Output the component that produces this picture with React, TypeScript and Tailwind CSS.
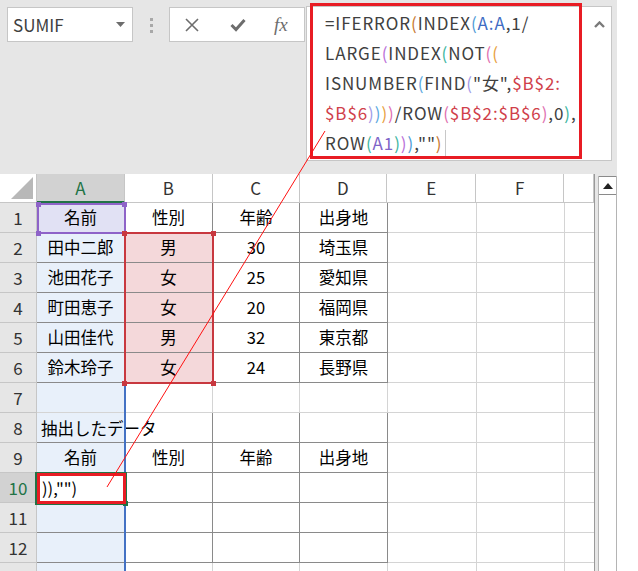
import React from 'react';

const font = { fontFamily: '"Noto Sans CJK JP", "Noto Sans", sans-serif' };

// column widths for A..G (G is cut off by the scrollbar)
const cols = [
  { key: 'A', w: 'w-[88px]' },
  { key: 'B', w: 'w-[88px]' },
  { key: 'C', w: 'w-[87px]' },
  { key: 'D', w: 'w-[88px]' },
  { key: 'E', w: 'w-[89px]' },
  { key: 'F', w: 'w-[88px]' },
  { key: '', w: 'w-[30px]' },
];

const rows: string[][] = [
  ['名前', '性別', '年齢', '出身地'],
  ['田中二郎', '男', '30', '埼玉県'],
  ['池田花子', '女', '25', '愛知県'],
  ['町田恵子', '女', '20', '福岡県'],
  ['山田佳代', '男', '32', '東京都'],
  ['鈴木玲子', '女', '24', '長野県'],
  [],
  [],
  ['名前', '性別', '年齢', '出身地'],
  [],
  [],
  [],
  [],
];

// paren / reference colours in the formula bar
const P1 = 'text-[#c8782f]';
const P2 = 'text-[#4e9ad6]';
const P3 = 'text-[#b970d8]';
const P4 = 'text-[#3bb5a0]';
const P5 = 'text-[#e070b0]';
const P6 = 'text-[#e8a040]';
const P7 = 'text-[#5aa8e0]';
const P8 = 'text-[#9f9be8]';
const REF_A = 'text-[#3f6cc4]';
const REF_B = 'text-[#d0404a]';
const REF_A1 = 'text-[#8064c8]';

function C({ c, children }: { c: string; children: React.ReactNode }) {
  return <span className={c}>{children}</span>;
}

function FormulaText() {
  return (
    <div className="text-[17px] leading-[30px] tracking-[0.9px] text-[#404040]" style={font}>
      <div>
        =IFERROR<C c={P1}>(</C>INDEX<C c={P2}>(</C><C c={REF_A}>A:A</C>,1/
      </div>
      <div>
        LARGE<C c={P3}>(</C>INDEX<C c={P4}>(</C>NOT<C c={P5}>(</C><C c={P6}>(</C>
      </div>
      <div>
        ISNUMBER<C c={P7}>(</C>FIND<C c={P8}>(</C>"女",<C c={REF_B}>$B$2:</C>
      </div>
      <div>
        <C c={REF_B}>$B$6</C><C c={P8}>)</C><C c={P7}>)</C><C c={P6}>)</C><C c={P5}>)</C>/ROW<C c={P5}>(</C>
        <C c={REF_B}>$B$2:$B$6</C><C c={P5}>)</C>,0<C c={P4}>)</C>,
      </div>
      <div className="flex items-center">
        <span>
          ROW<C c={P4}>(</C><C c={REF_A1}>A1</C><C c={P4}>)</C><C c={P3}>)</C><C c={P2}>)</C>,""<C c={P1}>)</C>
        </span>
        <span className="ml-[2px] w-px h-[27px] bg-[#c8c8c8]" />
      </div>
    </div>
  );
}

function Toolbar() {
  return (
    <div className="h-[174px] flex items-start pt-[6px]">
      <div className="mt-px ml-[7px] w-[126px] h-[35px] bg-white border border-[#c6c6c6] flex items-center justify-between pl-[5px] pr-[7px]">
        <span className="text-[17px] text-[#404040]" style={font}>SUMIF</span>
        <svg width="9" height="5" viewBox="0 0 9 5">
          <path d="M0 0 L9 0 L4.5 5 Z" fill="#6d6d6d" />
        </svg>
      </div>
      <div className="ml-[17px] mt-[12px] flex flex-col gap-[3px]">
        <span className="w-[3px] h-[3px] bg-[#a8a8a8]" />
        <span className="w-[3px] h-[3px] bg-[#a8a8a8]" />
        <span className="w-[3px] h-[3px] bg-[#a8a8a8]" />
      </div>
      <div className="mt-px ml-[16px] w-[136px] h-[35px] bg-white border border-[#c6c6c6] flex items-center">
        <svg className="ml-[15px]" width="14" height="14" viewBox="0 0 14 14">
          <path d="M1 1 L13 13 M13 1 L1 13" stroke="#6d6d6d" strokeWidth="1.6" />
        </svg>
        <svg className="ml-[31px]" width="16" height="14" viewBox="0 0 16 14">
          <path d="M1.5 7 L6 11.5 L14.5 2" stroke="#6d6d6d" strokeWidth="3" fill="none" />
        </svg>
        <span
          className="ml-[28px] text-[19px] italic text-[#6d6d6d] leading-none"
          style={{ fontFamily: '"Liberation Serif", serif' }}
        >
          fx
        </span>
      </div>
      <div className="ml-px w-[306px] h-[155px] bg-white border border-[#c6c6c6] flex justify-between pl-[18px] pt-px pr-[6px]">
        <FormulaText />
        <svg className="mt-[13px]" width="11" height="7" viewBox="0 0 11 7">
          <path d="M1 6 L5.5 1.5 L10 6" stroke="#7a7a7a" strokeWidth="2.4" fill="none" />
        </svg>
      </div>
    </div>
  );
}

function HeaderRow() {
  return (
    <div className="flex h-[29px]">
      <div className="w-[37px] border-r border-b border-[#c6c6c6] flex items-end justify-end p-[3px]">
        <svg width="22" height="22" viewBox="0 0 22 22">
          <path d="M22 0 L22 22 L0 22 Z" fill="#b8b8b8" />
        </svg>
      </div>
      {cols.map((c, i) => (
        <div
          key={i}
          className={`${c.w} flex items-center justify-center text-[17px] ${
            i === 0
              ? 'bg-[#d2d2d2] text-[#217346] border-b-2 border-b-[#217346] border-r border-r-[#c6c6c6]'
              : 'text-[#333] border-r border-b border-[#c6c6c6]'
          }`}
          style={font}
        >
          {c.key}
        </div>
      ))}
    </div>
  );
}

function isTable(r: number, c: number) {
  return c < 4 && ((r >= 0 && r <= 5) || (r >= 8 && r <= 11));
}

function BodyRow({ r }: { r: number }) {
  const data = rows[r];
  const active = r === 9;
  // row 13 is only a sliver at the bottom edge, its number falls outside the view
  const label = r < 12 ? r + 1 : '';
  return (
    <div className="flex h-[30px] shrink-0">
      <div
        className={`w-[37px] shrink-0 flex items-center justify-center text-[17px] border-r border-b border-[#c6c6c6] ${
          active ? 'bg-[#d2d2d2] text-[#217346]' : 'bg-[#e6e6e6] text-[#333]'
        }`}
        style={font}
      >
        {label}
      </div>
      {cols.map((c, i) => {
        const dark = isTable(r, i) || (r === 7 && i < 4);
        let bg = 'bg-white';
        if (i === 0) bg = r === 0 ? 'bg-[#e1e1f4]' : active ? 'bg-white' : 'bg-[#e8f0fa]';
        if (i === 1 && r >= 1 && r <= 5) bg = 'bg-[#f4d8da]';
        return (
          <div
            key={i}
            className={`${c.w} shrink-0 flex items-center justify-center text-[16.5px] text-black border-r border-b ${bg} ${
              dark ? 'border-[#8a8a8a]' : 'border-[#d4d4d4]'
            }`}
            style={font}
          >
            {data[i] ?? ''}
          </div>
        );
      })}
    </div>
  );
}

function Grid() {
  return (
    <div className="flex-1 flex min-h-0">
      <div className="w-[595px] flex flex-col overflow-hidden bg-white border-r border-[#9a9a9a]">
        <HeaderRow />
        {rows.map((_, r) => (
          <BodyRow key={r} r={r} />
        ))}
      </div>
      <div className="ml-[3px] mt-[2px] w-[19px] bg-white border-x border-[#b4b4b4] flex flex-col">
        <div className="h-[19px] border-b border-[#8a8a8a] border-t flex items-center justify-center">
          <svg width="10" height="6" viewBox="0 0 10 6">
            <path d="M0 6 L5 0 L10 6 Z" fill="#222" />
          </svg>
        </div>
      </div>
    </div>
  );
}

export default function App() {
  return (
    <div className="relative w-[638px] h-[571px] overflow-hidden bg-white flex" style={font}>
      <div className="w-[617px] h-full bg-[#e6e6e6] flex flex-col">
        <Toolbar />
        <Grid />
      </div>

      {/* text in A8 overflows into B8, A10 shows the tail of the formula */}
      <div className="absolute left-[41px] top-[413px] h-[30px] flex items-center text-[16.5px] text-black">
        抽出したデータ
      </div>

      {/* A1 reference outline */}
      <div className="absolute left-[37px] top-[203px] w-[89px] h-[31px] border-2 border-[#8e63c8]" />
      <span className="absolute left-[36px] top-[202px] w-[5px] h-[5px] bg-[#8e63c8]" />
      <span className="absolute left-[122px] top-[202px] w-[5px] h-[5px] bg-[#8e63c8]" />
      <span className="absolute left-[36px] top-[231px] w-[5px] h-[5px] bg-[#8e63c8]" />

      {/* A:A reference edge */}
      <div className="absolute left-[124px] top-[384px] w-[2px] h-[187px] bg-[#4472c4]" />

      {/* $B$2:$B$6 reference outline */}
      <div className="absolute left-[124px] top-[232px] w-[90px] h-[152px] border-2 border-[#c8383f]" />
      <span className="absolute left-[122px] top-[231px] w-[5px] h-[5px] bg-[#c8383f]" />
      <span className="absolute left-[211px] top-[231px] w-[5px] h-[5px] bg-[#c8383f]" />
      <span className="absolute left-[122px] top-[381px] w-[5px] h-[5px] bg-[#c8383f]" />
      <span className="absolute left-[211px] top-[381px] w-[5px] h-[5px] bg-[#c8383f]" />

      {/* active cell A10 */}
      <div className="absolute left-[35px] top-[472px] w-[92px] h-[33px] border-2 border-[#217346]" />
      <span className="absolute left-[123px] top-[501px] w-[5px] h-[5px] bg-[#217346]" />
      <div className="absolute left-[37px] top-[473px] w-[89px] h-[31px] border-[3px] border-[#e81c24] flex items-center pl-[2px] text-[16.5px] text-black">
        )),"")
      </div>

      {/* annotation around the formula bar */}
      <div className="absolute left-[310px] top-[3px] w-[272px] h-[156px] border-[3px] border-[#e81c24]" />

      <svg className="absolute left-0 top-0 pointer-events-none" width="638" height="571">
        <line x1="325" y1="131" x2="107" y2="487" stroke="#ff1010" strokeWidth="1" />
      </svg>
    </div>
  );
}
